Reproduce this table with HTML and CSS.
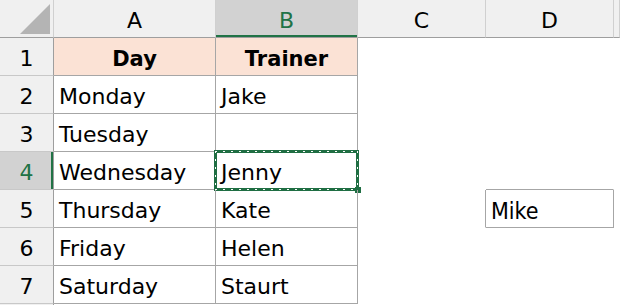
FILE: index.html
```html
<!DOCTYPE html>
<html lang="en">
<head>
  <meta charset="UTF-8">
  <meta name="viewport" content="width=device-width, initial-scale=1.0">
  <title>Trainer Schedule</title>
  <link rel="stylesheet" href="styles.css">
</head>
<body>
  <div class="sheet">
    <div class="row head-row">
      <div class="corner">
        <svg width="54" height="37" viewBox="0 0 54 37"><polygon points="20,34 50,34 50,4" fill="#b4b4b4"/></svg>
      </div>
      <div class="col-hd">A</div>
      <div class="col-hd active">B</div>
      <div class="col-hd">C</div>
      <div class="col-hd">D</div>
      <div class="col-hd"></div>
    </div>

    <div class="row">
      <div class="row-hd">1</div>
      <div class="cell grid title">Day</div>
      <div class="cell grid title">Trainer</div>
      <div class="cell"></div>
      <div class="cell"></div>
      <div class="cell"></div>
    </div>
    <div class="row">
      <div class="row-hd">2</div>
      <div class="cell grid">Monday</div>
      <div class="cell grid">Jake</div>
      <div class="cell"></div>
      <div class="cell"></div>
      <div class="cell"></div>
    </div>
    <div class="row">
      <div class="row-hd">3</div>
      <div class="cell grid">Tuesday</div>
      <div class="cell grid"></div>
      <div class="cell"></div>
      <div class="cell"></div>
      <div class="cell"></div>
    </div>
    <div class="row">
      <div class="row-hd active">4</div>
      <div class="cell grid">Wednesday</div>
      <div class="cell grid selected">Jenny<span class="ants"></span><span class="handle"></span></div>
      <div class="cell"></div>
      <div class="cell edge-bottom"></div>
      <div class="cell"></div>
    </div>
    <div class="row">
      <div class="row-hd">5</div>
      <div class="cell grid">Thursday</div>
      <div class="cell grid">Kate</div>
      <div class="cell edge-right"></div>
      <div class="cell grid note">Mike</div>
      <div class="cell"></div>
    </div>
    <div class="row">
      <div class="row-hd">6</div>
      <div class="cell grid">Friday</div>
      <div class="cell grid">Helen</div>
      <div class="cell"></div>
      <div class="cell"></div>
      <div class="cell"></div>
    </div>
    <div class="row">
      <div class="row-hd">7</div>
      <div class="cell grid">Saturday</div>
      <div class="cell grid">Staurt</div>
      <div class="cell"></div>
      <div class="cell"></div>
      <div class="cell"></div>
    </div>
    <div class="row">
      <div class="row-hd"></div>
      <div class="cell"></div>
      <div class="cell"></div>
      <div class="cell"></div>
      <div class="cell"></div>
      <div class="cell"></div>
    </div>
  </div>
</body>
</html>
```

FILE: styles.css
```css
* {
  box-sizing: border-box;
}

body {
  margin: 0;
  background-color: #ffffff;
  font-family: 'DejaVu Sans', sans-serif;
  font-size: 22px;
  color: #000000;
  overflow: hidden;
}

.sheet {
  width: 620px;
  height: 305px;
  overflow: hidden;
}

.row {
  display: grid;
  grid-template-columns: 54px 162px 142px 128px 128px 1fr;
  height: 38px;
}

/* column letters */
.corner,
.col-hd {
  background-color: #f0f0f0;
  border-right: 1px solid #d0d0d0;
  border-bottom: 1px solid #9e9e9e;
}

.corner svg {
  display: block;
}

.col-hd {
  display: flex;
  align-items: center;
  justify-content: center;
  padding-top: 3px;
}

.col-hd.active {
  background-color: #d2d2d2;
  color: #217346;
  box-shadow: inset 0 -2px 0 #217346;
}

/* row numbers */
.row-hd {
  display: flex;
  align-items: center;
  justify-content: center;
  padding-top: 4px;
  background-color: #f0f0f0;
  border-right: 1px solid #9e9e9e;
  border-bottom: 1px solid #c8c8c8;
}

.row-hd.active {
  background-color: #d2d2d2;
  color: #217346;
  box-shadow: inset -2px 0 0 #217346;
}

/* cells */
.cell {
  position: relative;
  display: flex;
  align-items: center;
  padding: 4px 5px 0;
  border-right: 1px solid transparent;
  border-bottom: 1px solid transparent;
  white-space: nowrap;
}

.cell.grid {
  border-color: #a6a6a6;
}

.cell.edge-right {
  border-right-color: #a6a6a6;
}

.cell.edge-bottom {
  border-bottom-color: #a6a6a6;
}

.cell.title {
  justify-content: center;
  background-color: #fbe2d5;
  font-weight: bold;
  font-size: 21px;
}

.cell.note {
  font-family: 'DejaVu Sans Condensed', 'DejaVu Sans', sans-serif;
  font-size: 23px;
}

/* copy marquee around the active cell */
.ants {
  position: absolute;
  top: -2px;
  left: -2px;
  right: -2px;
  bottom: -2px;
  border: 3px solid #1f6e43;
}

.ants::after {
  content: "";
  position: absolute;
  top: -2px;
  left: -2px;
  right: -2px;
  bottom: -2px;
  background:
    repeating-linear-gradient(90deg, #ffffff 0 2px, transparent 2px 8px) top left / 100% 1px no-repeat,
    repeating-linear-gradient(90deg, #ffffff 0 2px, transparent 2px 8px) bottom left / 100% 1px no-repeat,
    repeating-linear-gradient(180deg, #ffffff 0 2px, transparent 2px 8px) top left / 1px 100% no-repeat,
    repeating-linear-gradient(180deg, #ffffff 0 2px, transparent 2px 8px) top right / 1px 100% no-repeat;
}

.handle {
  position: absolute;
  right: -4px;
  bottom: -4px;
  width: 6px;
  height: 6px;
  background-color: #1f6e43;
}
```
